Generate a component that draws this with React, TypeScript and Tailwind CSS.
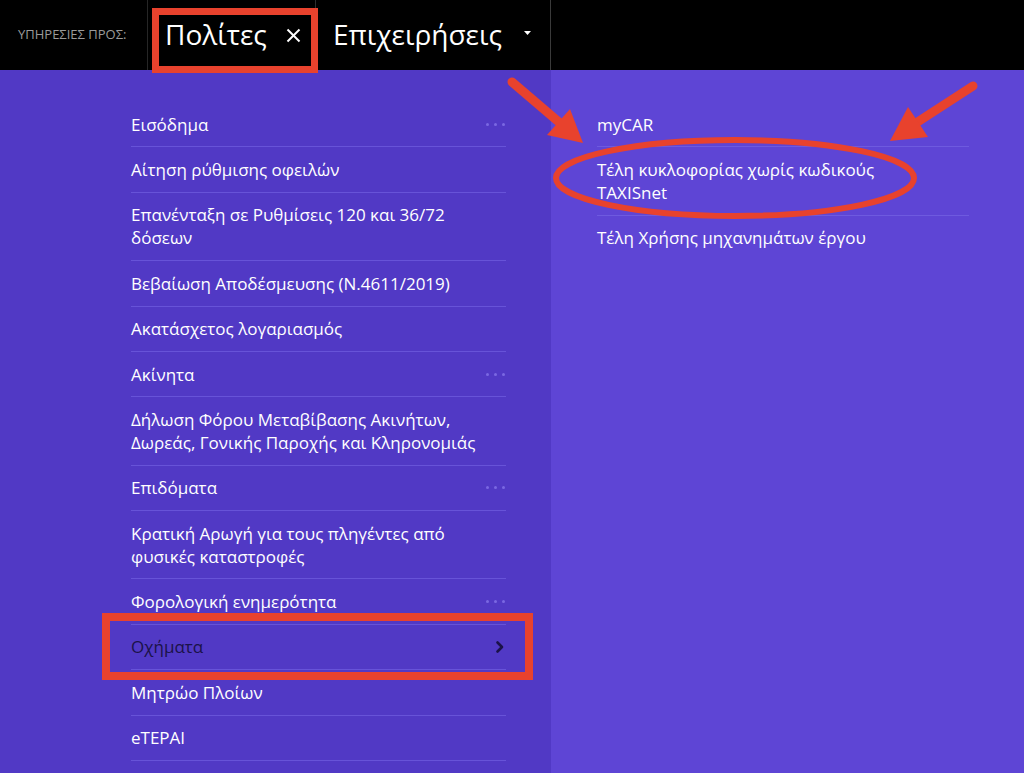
import React from "react";

type Item = { label: string; more?: boolean; active?: boolean };

const leftItems: Item[] = [
  { label: "Εισόδημα", more: true },
  { label: "Αίτηση ρύθμισης οφειλών" },
  { label: "Επανένταξη σε Ρυθμίσεις 120 και 36/72 δόσεων" },
  { label: "Βεβαίωση Αποδέσμευσης (Ν.4611/2019)" },
  { label: "Ακατάσχετος λογαριασμός" },
  { label: "Ακίνητα", more: true },
  { label: "Δήλωση Φόρου Μεταβίβασης Ακινήτων, Δωρεάς, Γονικής Παροχής και Κληρονομιάς" },
  { label: "Επιδόματα", more: true },
  { label: "Κρατική Αρωγή για τους πληγέντες από φυσικές καταστροφές" },
  { label: "Φορολογική ενημερότητα", more: true },
  { label: "Οχήματα", active: true },
  { label: "Μητρώο Πλοίων" },
  { label: "eTEPAI" },
];

const rightItems = [
  "myCAR",
  "Τέλη κυκλοφορίας χωρίς κωδικούς TAXISnet",
  "Τέλη Χρήσης μηχανημάτων έργου",
];

const Dots = () => (
  <span className="flex items-center gap-[5px] pr-[1px] shrink-0">
    <span className="w-[3px] h-[3px] rounded-full bg-[#7a68e2]" />
    <span className="w-[3px] h-[3px] rounded-full bg-[#7a68e2]" />
    <span className="w-[3px] h-[3px] rounded-full bg-[#7a68e2]" />
  </span>
);

const MenuRow = ({ item }: { item: Item }) => (
  <div className="flex items-center justify-between gap-4 py-[10.7px] border-b border-[#6753d8]">
    <span
      className={`text-[17px] leading-[23px] font-medium ${
        item.active ? "text-[#1b1248]" : "text-white"
      }`}
    >
      {item.label}
    </span>
    {item.more && <Dots />}
    {item.active && (
      <svg width="10" height="14" viewBox="0 0 10 14" className="mr-[1px] shrink-0">
        <polyline
          points="2.5,2.5 7,7 2.5,11.5"
          fill="none"
          stroke="#1b1248"
          strokeWidth="2.6"
          strokeLinecap="round"
          strokeLinejoin="round"
        />
      </svg>
    )}
  </div>
);

export default function App() {
  return (
    <div
      className="relative w-[1024px] h-[773px] overflow-hidden bg-[#5139c5]"
      style={{ fontFamily: '"Open Sans", "Noto Sans", sans-serif' }}
    >
      {/* Header */}
      <div className="flex h-[70px] bg-black">
        <div className="w-[148px] flex items-center pl-[18px] border-r border-[#262626]">
          <span className="text-[13px] text-[#9a9a9a]">ΥΠΗΡΕΣΙΕΣ ΠΡΟΣ:</span>
        </div>
        <div className="w-[168px] flex items-center pl-[17px] border-r border-[#2e2e2e]">
          <span className="text-[28px] leading-none text-white pb-[2px]">Πολίτες</span>
          <svg width="15" height="15" viewBox="0 0 15 15" className="ml-[19px]">
            <line x1="1.5" y1="1.5" x2="13.5" y2="13.5" stroke="white" strokeWidth="2" />
            <line x1="13.5" y1="1.5" x2="1.5" y2="13.5" stroke="white" strokeWidth="2" />
          </svg>
        </div>
        <div className="w-[235px] flex items-center pl-[17px] border-r border-[#3a3a3a]">
          <span className="text-[28px] leading-none text-white pb-[2px]">Επιχειρήσεις</span>
          <svg width="7" height="5" viewBox="0 0 7 5" className="ml-[22px] mb-[3px]">
            <polygon points="0,0 7,0 3.5,4" fill="white" />
          </svg>
        </div>
        <div className="flex-1" />
      </div>

      {/* Body */}
      <div className="flex h-[703px]">
        <div className="w-[551px] bg-[#5139c5] pt-[32px]">
          <div className="ml-[131px] w-[375px]">
            {leftItems.map((it) => (
              <MenuRow key={it.label} item={it} />
            ))}
          </div>
        </div>
        <div className="flex-1 bg-[#5e45d5] pt-[32px]">
          <div className="ml-[46px] w-[372px]">
            {rightItems.map((label, i) => (
              <div
                key={label}
                className={`py-[10.7px] ${i < rightItems.length - 1 ? "border-b border-[#6e5adf]" : ""}`}
              >
                <span className="text-[17px] leading-[23px] font-medium text-white pr-[40px] block">
                  {label}
                </span>
              </div>
            ))}
          </div>
        </div>
      </div>

      {/* Annotations */}
      <div className="absolute left-[152px] top-[8px] w-[166px] h-[65px] border-[7px] border-[#e8422d]" />
      <div className="absolute left-[102px] top-[613px] w-[431px] h-[67px] border-[8px] border-[#e8422d]" />
      <svg className="absolute inset-0 pointer-events-none" width="1024" height="773">
        <ellipse cx="735" cy="178" rx="179" ry="38" fill="none" stroke="#e8422d" strokeWidth="6" />
        <line x1="512" y1="82" x2="560" y2="123" stroke="#e8422d" strokeWidth="9" strokeLinecap="round" />
        <polygon points="583,143 547,135 570,109" fill="#e8422d" />
        <line x1="973" y1="86" x2="916" y2="123" stroke="#e8422d" strokeWidth="9" strokeLinecap="round" />
        <polygon points="890,141 908,107 928,137" fill="#e8422d" />
      </svg>
    </div>
  );
}
